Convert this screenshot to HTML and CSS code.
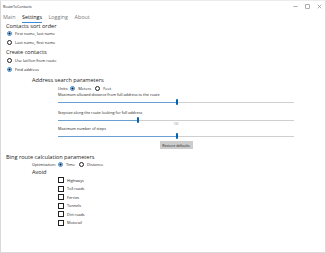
FILE: index.html
```html
<!DOCTYPE html>
<html lang="en">
<head>
   <meta charset="UTF-8">
   <title>RouteToContacts</title>
   <link rel="stylesheet" href="styles.css">
</head>
<body>
   <div class="window">
       <div class="titlebar">
           <span class="app-title">RouteToContacts</span>
           <div class="controls">
               <svg width="5" height="5" viewBox="0 0 5 5"><line x1="0.5" y1="2.5" x2="4.5" y2="2.5" stroke="#777" stroke-width="0.6"/></svg>
               <svg width="5" height="5" viewBox="0 0 5 5"><rect x="0.7" y="0.7" width="3.6" height="3.6" fill="none" stroke="#777" stroke-width="0.6"/></svg>
               <svg width="5" height="5" viewBox="0 0 5 5"><path d="M0.7 0.7 L4.3 4.3 M4.3 0.7 L0.7 4.3" stroke="#777" stroke-width="0.6"/></svg>
           </div>
       </div>

       <nav class="tabs">
           <span class="tab">Main</span>
           <span class="tab active">Settings</span>
           <span class="tab">Logging</span>
           <span class="tab">About</span>
       </nav>

       <main class="settings">
           <h2 class="group-title">Contacts sort order</h2>
           <label class="option"><span class="radio checked"></span>First name, last name</label>
           <label class="option"><span class="radio"></span>Last name, first name</label>

           <h2 class="group-title spaced">Create contacts</h2>
           <label class="option"><span class="radio"></span>Use lat/lon from route</label>
           <label class="option"><span class="radio checked"></span>Find address</label>

           <section class="subgroup">
               <h3 class="sub-title">Address search parameters</h3>
               <div class="inline-row units">
                   <span class="row-label">Units:</span>
                   <label class="option"><span class="radio checked"></span>Meters</label>
                   <label class="option"><span class="radio"></span>Feet</label>
               </div>

               <div class="sliders">
                   <div class="slider-label">Maximum allowed distance from full address to the route</div>
                   <div class="slider first"><div class="track"><div class="fill" style="width: 50.2%"></div><div class="thumb"></div></div></div>

                   <div class="slider-label">Stepsize along the route looking for full address</div>
                   <div class="slider"><div class="track"><div class="fill" style="width: 33.6%"></div><div class="thumb"></div></div></div>
                   <div class="tick-value">100</div>

                   <div class="slider-label">Maximum number of steps</div>
                   <div class="slider last"><div class="track"><div class="fill" style="width: 50.2%"></div><div class="thumb"></div></div></div>

                   <div class="button-row"><button class="restore">Restore defaults</button></div>
               </div>
           </section>

           <h2 class="group-title bing">Bing route calculation parameters</h2>
           <section class="subgroup">
               <div class="inline-row optimisation">
                   <span class="row-label">Optimisation:</span>
                   <label class="option"><span class="radio checked"></span>Time</label>
                   <label class="option"><span class="radio"></span>Distance</label>
               </div>
               <h3 class="sub-title avoid">Avoid</h3>
               <div class="checks">
                   <label class="check"><span class="box"></span>Highways</label>
                   <label class="check"><span class="box"></span>Toll roads</label>
                   <label class="check"><span class="box"></span>Ferries</label>
                   <label class="check"><span class="box"></span>Tunnels</label>
                   <label class="check"><span class="box"></span>Dirt roads</label>
                   <label class="check"><span class="box"></span>Motorail</label>
               </div>
           </section>
       </main>
   </div>
</body>
</html>
```

FILE: styles.css
```css
       * {
           box-sizing: border-box;
       }
       body {
           margin: 0;
           font-family: 'Open Sans', 'Noto Sans', sans-serif;
           background-color: #fff;
           color: #1a1a1a;
       }
       .window {
           width: 326px;
           height: 253px;
           border: 1px solid #d9d9d9;
           border-top-color: #ececec;
           overflow: hidden;
       }
       .titlebar {
           height: 10px;
           display: flex;
           align-items: center;
           justify-content: space-between;
           padding: 0 3px 0 2px;
       }
       .app-title {
           font-size: 3.6px;
           color: #222;
       }
       .controls {
           display: flex;
           gap: 7px;
       }
       .tabs {
           display: flex;
           gap: 6.5px;
           height: 12px;
           padding-left: 2px;
           font-size: 5.4px;
           color: #7a7a7a;
       }
       .tab {
           line-height: 12px;
           position: relative;
       }
       .tab.active {
           color: #111;
       }
       .tab.active::after {
           content: '';
           position: absolute;
           left: 0;
           right: 0;
           bottom: 0;
           height: 1px;
           background-color: #3a8ad8;
       }
       .settings {
           padding-left: 5px;
       }
       .group-title {
           margin: 0;
           font-size: 5.6px;
           font-weight: 400;
           height: 6px;
           line-height: 6px;
       }
       .group-title.spaced {
           margin-top: 2px;
           height: 7px;
           line-height: 7px;
       }
       .option {
           display: flex;
           align-items: center;
           height: 9px;
           font-size: 4px;
           color: #222;
       }
       .radio {
           width: 5px;
           height: 5px;
           border: 0.6px solid #222;
           border-radius: 50%;
           margin: 0 3px 0 1px;
           flex: none;
       }
       .radio.checked {
           border: 1px solid #3a8ad8;
           background: radial-gradient(circle, #111 0 0.9px, #cfe3f6 1.1px);
       }
       .subgroup {
           padding-left: 26px;
       }
       .sub-title {
           margin: 2px 0 0;
           font-size: 5.6px;
           font-weight: 400;
           height: 8px;
           line-height: 8px;
       }
       .sub-title.avoid {
           margin-top: 0;
       }
       .inline-row {
           display: flex;
           align-items: center;
           height: 8px;
           font-size: 3.8px;
       }
       .inline-row .option {
           height: 8px;
           margin-right: 3px;
       }
       .units {
           padding-left: 26px;
       }
       .row-label {
           margin-right: 1px;
           color: #222;
       }
       .sliders {
           padding-left: 26px;
           width: 262px;
       }
       .slider-label {
           font-size: 3.8px;
           height: 6px;
           line-height: 6px;
           color: #222;
       }
       .slider {
           height: 8px;
           display: flex;
           align-items: center;
       }
       .slider.first {
           margin-bottom: 4px;
       }
       .slider.last {
           margin-bottom: 1px;
       }
       .track {
           position: relative;
           width: 100%;
           height: 1px;
           background-color: #cfcfcf;
           display: flex;
       }
       .fill {
           height: 1px;
           background-color: #6a9fd4;
       }
       .thumb {
           width: 2px;
           height: 6px;
           margin-top: -2.5px;
           background-color: #0063b1;
           border-radius: 1px;
       }
       .tick-value {
           text-align: center;
           font-size: 2.8px;
           color: #888;
           height: 3px;
           line-height: 3px;
           margin-top: -1px;
       }
       .button-row {
           display: flex;
           justify-content: center;
       }
       .restore {
           font-family: 'Open Sans', 'Noto Sans', sans-serif;
           font-size: 3.6px;
           color: #222;
           background-color: #cccccc;
           border: none;
           height: 8px;
           width: 33px;
           padding: 0;
       }
       .group-title.bing {
           margin-top: 4px;
           height: 8px;
           line-height: 8px;
       }
       .optimisation {
           height: 7px;
       }
       .optimisation .option {
           height: 7px;
       }
       .checks {
           padding-left: 26px;
       }
       .check {
           display: flex;
           align-items: center;
           height: 8.5px;
           font-size: 3.8px;
           color: #222;
       }
       .box {
           width: 6px;
           height: 6px;
           border: 0.7px solid #222;
           margin-right: 3px;
       }
```
